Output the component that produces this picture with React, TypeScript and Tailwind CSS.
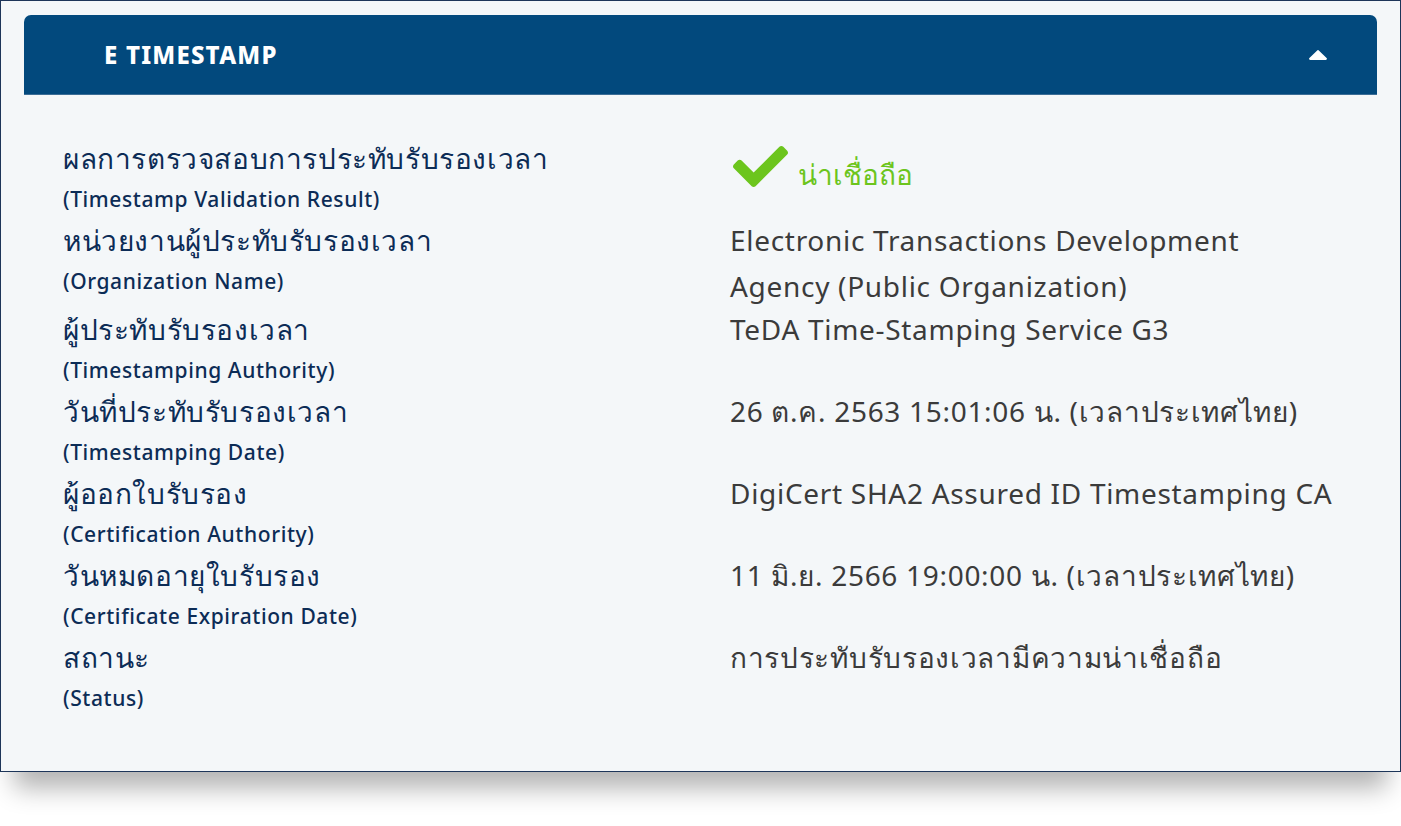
import { useState } from 'react';

const rows = [
  { th: 'หน่วยงานผู้ประทับรับรองเวลา', en: '(Organization Name)', value: ['Electronic Transactions Development', 'Agency (Public Organization)'] },
  { th: 'ผู้ประทับรับรองเวลา', en: '(Timestamping Authority)', value: ['TeDA Time-Stamping Service G3'] },
  { th: 'วันที่ประทับรับรองเวลา', en: '(Timestamping Date)', value: ['26 ต.ค. 2563 15:01:06 น. (เวลาประเทศไทย)'] },
  { th: 'ผู้ออกใบรับรอง', en: '(Certification Authority)', value: ['DigiCert SHA2 Assured ID Timestamping CA'] },
  { th: 'วันหมดอายุใบรับรอง', en: '(Certificate Expiration Date)', value: ['11 มิ.ย. 2566 19:00:00 น. (เวลาประเทศไทย)'] },
  { th: 'สถานะ', en: '(Status)', value: ['การประทับรับรองเวลามีความน่าเชื่อถือ'] },
];

function CheckIcon() {
  return (
    <svg viewBox="0 60 512 392" className="w-[55px] h-[43px] fill-[#6cc51d]">
      <path d="M173.898 439.404l-166.4-166.4c-9.997-9.997-9.997-26.206 0-36.204l36.203-36.204c9.997-9.998 26.207-9.998 36.204 0L192 312.69 432.095 72.596c9.997-9.997 26.207-9.997 36.204 0l36.203 36.204c9.997 9.997 9.997 26.206 0 36.204l-294.4 294.401c-9.998 9.997-26.207 9.997-36.204-.001z" />
    </svg>
  );
}

function Label({ th, en }: { th: string; en: string }) {
  return (
    <div>
      <p className="text-[28px] leading-[40px] tracking-[0.6px] text-[#0c2c56]">{th}</p>
      <p className="text-[21px] leading-[42px] tracking-[0.6px] font-medium text-[#0c2c56]">{en}</p>
    </div>
  );
}

export default function App() {
  const [open, setOpen] = useState(true);

  return (
    <div className="w-[1401px] h-[826px] bg-white" style={{ fontFamily: '"Noto Sans", "Open Sans", sans-serif' }}>
      <div className="w-[1401px] h-[772px] border border-[#1d3559] bg-[#f4f7f9] pt-[14px] px-[23px] shadow-[0_30px_24px_-14px_rgba(0,0,0,0.3)]">
        <button
          onClick={() => setOpen(!open)}
          className="w-full h-[80px] bg-[#02497d] rounded-t-[7px] flex items-center justify-between pl-[80px] pr-[50px] border-b border-[#3b6d96]"
        >
          <span className="text-white font-extrabold text-[24px] tracking-[1.2px]">E TIMESTAMP</span>
          <svg viewBox="0 0 18 10" className={`w-[18px] h-[10px] fill-white ${open ? '' : 'rotate-180'}`}>
            <path d="M1.2 10h15.6c1 0 1.5-1.2.8-1.9L9.8.4a1.1 1.1 0 0 0-1.6 0L.4 8.1c-.7.7-.2 1.9.8 1.9z" />
          </svg>
        </button>

        {open && (
          <div className="pt-[43px] pl-[39px]">
            <div className="grid grid-cols-[667px_1fr]">
              <Label th="ผลการตรวจสอบการประทับรับรองเวลา" en="(Timestamp Validation Result)" />
              <div className="flex items-end gap-[10px] pl-[3px] -mt-[12px] h-[62px]">
                <CheckIcon />
                <span className="text-[28px] leading-[40px] text-[#6cc51d] -mb-[6px]">น่าเชื่อถือ</span>
              </div>
            </div>
            {rows.map((r) => (
              <div key={r.en} className="grid grid-cols-[667px_1fr]">
                <Label th={r.th} en={r.en} />
                <div className="-mt-[3px]">
                  {r.value.map((v) => (
                    <p key={v} className="text-[28px] leading-[46px] tracking-[0.7px] text-[#3b3b3b]">{v}</p>
                  ))}
                </div>
              </div>
            ))}
          </div>
        )}
      </div>
    </div>
  );
}
